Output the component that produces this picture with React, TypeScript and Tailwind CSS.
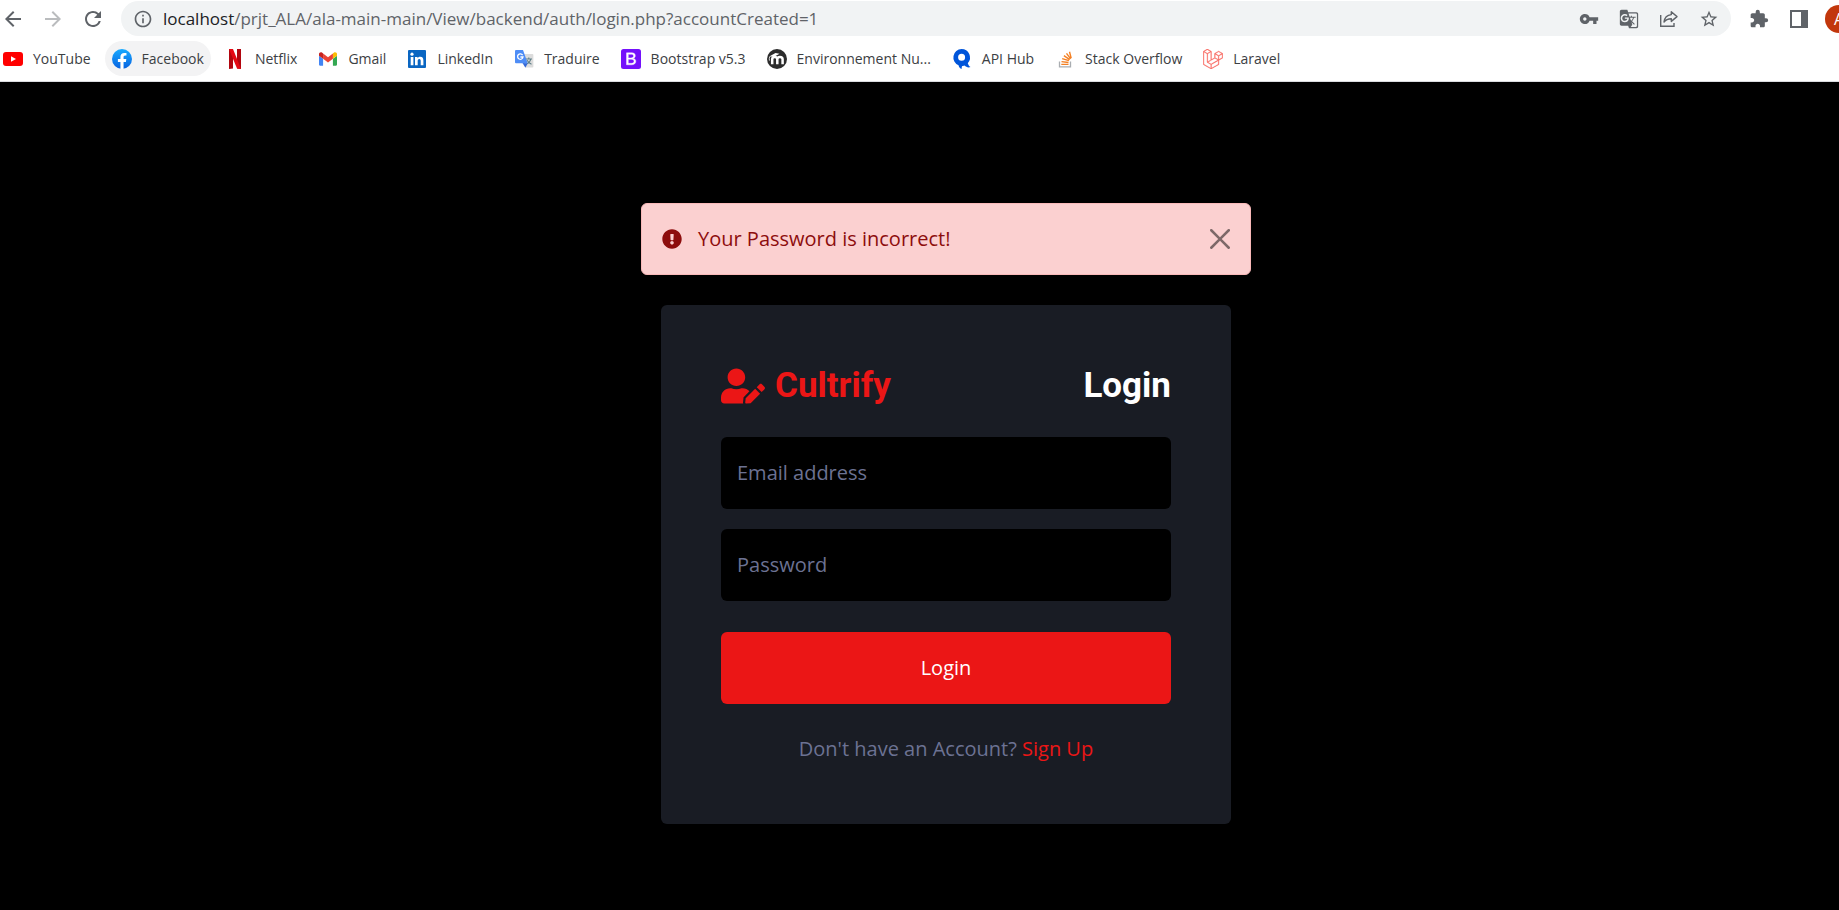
import type { ReactNode } from "react";
import {
  MdArrowBack,
  MdArrowForward,
  MdRefresh,
  MdInfoOutline,
  MdVpnKey,
  MdGTranslate,
  MdStarOutline,
  MdExtension,
} from "react-icons/md";
import { FaExclamationCircle, FaUserEdit } from "react-icons/fa";
import { SiLaravel } from "react-icons/si";

type Bookmark = { label: string; icon: ReactNode; active?: boolean };

const YouTubeIcon = () => (
  <svg viewBox="0 0 20 20" className="size-5">
    <rect x="0" y="3" width="20" height="14" rx="3" fill="#f00" />
    <path d="M8 7.2 13 10l-5 2.8z" fill="#fff" />
  </svg>
);

const FacebookIcon = () => (
  <svg viewBox="0 0 24 24" className="size-5">
    <defs>
      <linearGradient id="fb" x1="0" y1="0" x2="0" y2="1">
        <stop offset="0" stopColor="#19aaff" />
        <stop offset="1" stopColor="#0862e0" />
      </linearGradient>
    </defs>
    <circle cx="12" cy="12" r="12" fill="url(#fb)" />
    <path
      fill="#fff"
      d="M16.67 15.47 17.2 12h-3.33V9.75c0-.95.47-1.87 1.96-1.87h1.51V4.92s-1.37-.23-2.69-.23c-2.74 0-4.53 1.66-4.53 4.67V12H7.08v3.47h3.04v8.39a12 12 0 0 0 3.75 0v-8.39z"
    />
  </svg>
);

const NetflixIcon = () => (
  <svg viewBox="0 0 20 20" className="size-5">
    <path d="M4 0h4v19.6L4 20z" fill="#b1060f" />
    <path d="M12 0h4v20l-4-.4z" fill="#b1060f" />
    <path d="M4 0h4l8 20-4-.4z" fill="#e50914" />
  </svg>
);

const GmailIcon = () => (
  <svg viewBox="52 42 88 66" className="h-5 w-5 p-px">
    <path fill="#4285f4" d="M58 108h14V74L52 59v43c0 3.32 2.69 6 6 6" />
    <path fill="#34a853" d="M120 108h14c3.32 0 6-2.69 6-6V59l-20 15" />
    <path fill="#fbbc04" d="M120 48v26l20-15v-8c0-7.42-8.47-11.65-14.4-7.2" />
    <path fill="#ea4335" d="M72 74V48l24 18 24-18v26L96 92" />
    <path fill="#c5221f" d="M52 51v8l20 15V48l-5.6-4.2c-5.94-4.45-14.4-.22-14.4 7.2" />
  </svg>
);

const LinkedInIcon = () => (
  <svg viewBox="0 0 20 20" className="size-5">
    <rect x="1" y="1" width="18" height="18" rx="1" fill="#0a66c2" />
    <circle cx="5" cy="5.2" r="1.6" fill="#fff" />
    <path
      fill="#fff"
      d="M3.7 8h2.7v8.3H3.7zM8 8h2.5v1.2c.5-.8 1.4-1.4 2.7-1.4 2.500 0 3.200 1.600 3.200 4v4.500h-2.700v-4.100c0-1.100-.2-2.100-1.400-2.100-1.300 0-1.600 1-1.600 2.100v4.100H8z"
    />
  </svg>
);

const TranslateIcon = () => (
  <svg viewBox="0 0 20 20" className="size-5">
    <path d="M9 5h9.500a.9.9 0 0 1 .9.9v11.700a.9.9 0 0 1-.9.9H12z" fill="#dcdcdc" />
    <path
      d="M12 10h6M14.800 8.500V10M16.800 10c-.5 2.600-2.300 4.300-4.200 5.100M13.200 11.300c.8 1.800 2.300 3.200 4.300 4"
      fill="none"
      stroke="#5f7f88"
      strokeWidth="1.100"
    />
    <path d="m8.500 14 5.200.2-2.300 4.600z" fill="#3367d6" />
    <path d="M2 .9h7l4.700 13.400H2a1 1 0 0 1-1-1V1.900a1 1 0 0 1 1-1z" fill="#4e8df6" />
    <path
      d="M8.600 6.100A2.700 2.700 0 1 0 9 8H6.400"
      fill="none"
      stroke="#fff"
      strokeWidth="1.300"
    />
  </svg>
);

const BootstrapIcon = () => (
  <svg viewBox="0 0 20 20" className="size-5">
    <rect width="20" height="20" rx="2.500" fill="#7411fb" />
    <path
      fillRule="evenodd"
      fill="#fff"
      stroke="#fff"
      strokeWidth=".4"
      d="M5.500 3.800h5.300c2.200 0 3.500 1.100 3.500 2.900 0 1.300-.8 2.300-2 2.600v.1c1.500.2 2.500 1.300 2.500 2.900 0 2.200-1.600 3.500-4.200 3.500H5.500zm1.800 1.500v3.600h2.600c1.700 0 2.600-.6 2.600-1.800s-.8-1.800-2.200-1.800zm0 5v4h3.100c1.700 0 2.600-.7 2.600-2s-.9-2-2.800-2z"
    />
  </svg>
);

const MoodleIcon = () => (
  <svg viewBox="0 0 20 20" className="size-5">
    <circle cx="10" cy="10" r="10" fill="#2c2c2c" />
    <path
      d="M5.200 15.200V10.300c0-1.500.9-2.300 2.500-2.300s2.600.8 2.600 2.300v4.900M10.300 15.200v-4.900c0-1.500 1-2.300 2.600-2.300s2.700.8 2.700 2.300v4.900"
      fill="none"
      stroke="#fff"
      strokeWidth="2.500"
    />
    <path d="M2.200 7.600 8.500 4l4 .8-5.300 3z" fill="#fff" />
    <path d="M2.700 7.600c-.5 1.300-.5 2.600-.3 4" fill="none" stroke="#fff" strokeWidth=".8" />
  </svg>
);

const ApiHubIcon = () => (
  <svg viewBox="0 0 20 20" className="size-5">
    <path
      fillRule="evenodd"
      fill="#0055da"
      d="M9.500 0a8.500 8.500 0 0 1 6.300 14.200c.6 1.900 1.600 3.200 2.700 3.800-1.800.9-4.300.4-6-1.400l-1.600.3c-.9 0-1.200.5-1.300 3.100-1.500-.4-2.500-1.600-3.100-3.700A8.500 8.500 0 0 1 9.500 0zm.1 4.700a3.500 3.500 0 1 0 0 7 3.500 3.500 0 0 0 0-7z"
    />
  </svg>
);

const StackOverflowIcon = () => (
  <svg viewBox="0 0 20 20" className="size-5">
    <path d="M4.500 12.500v5.400h11v-5.400" fill="none" stroke="#a9adb1" strokeWidth="1.300" />
    <path
      d="M6.300 15.400h7.200M6.500 12.600l7 .9M7.200 9.600l6.700 2M8.900 6.600l5.800 4M11.500 4.300l4.200 5.600M14.500 2.800l1.700 6.500"
      fill="none"
      stroke="#f48024"
      strokeWidth="1.400"
    />
  </svg>
);

const ShareIcon = () => (
  <svg viewBox="0 0 20 20" className="size-5" fill="none" stroke="#5f6368" strokeWidth="1.400">
    <path d="M1.700 6v11.300H15V14" />
    <path d="M12.300 2.800 18 7.600l-5.700 4.800V9.700c-3 0-5.500.8-7.300 3.300.5-4 3-7 7.300-7.400z" strokeLinejoin="round" />
  </svg>
);

const SidePanelIcon = () => (
  <svg viewBox="0 0 20 20" className="size-5">
    <path fillRule="evenodd" fill="#5f6368" d="M1 1h18v18H1zM3 3v14h9V3z" />
  </svg>
);

const bookmarks: Bookmark[] = [
  { label: "YouTube", icon: <YouTubeIcon /> },
  { label: "Facebook", icon: <FacebookIcon />, active: true },
  { label: "Netflix", icon: <NetflixIcon /> },
  { label: "Gmail", icon: <GmailIcon /> },
  { label: "LinkedIn", icon: <LinkedInIcon /> },
  { label: "Traduire", icon: <TranslateIcon /> },
  { label: "Bootstrap v5.3", icon: <BootstrapIcon /> },
  { label: "Environnement Nu...", icon: <MoodleIcon /> },
  { label: "API Hub", icon: <ApiHubIcon /> },
  { label: "Stack Overflow", icon: <StackOverflowIcon /> },
  {
    label: "Laravel",
    icon: <SiLaravel className="size-5 text-[#f9665e]" stroke="currentColor" strokeWidth={0.4} />,
  },
];

function IconButton({ label, children }: { label: string; children: ReactNode }) {
  return (
    <button type="button" aria-label={label} className="flex shrink-0 items-center justify-center text-[#5f6368]">
      {children}
    </button>
  );
}

function BrowserBar() {
  return (
    <header className="border-b border-[#dadce0] bg-white pt-px pb-[5px] font-['Open_Sans','Noto_Sans',sans-serif]">
      <div className="flex h-[35px] items-center pl-px">
        <div className="flex items-center gap-4 pr-4">
          <IconButton label="Back">
            <MdArrowBack className="size-6" />
          </IconButton>
          <button type="button" aria-label="Forward" disabled className="text-[#babcbe]">
            <MdArrowForward className="size-6" />
          </button>
          <IconButton label="Reload">
            <MdRefresh className="size-6" />
          </IconButton>
        </div>
        <div className="flex h-full min-w-0 flex-1 items-center rounded-full bg-[#f1f3f4] pr-3 pl-3">
          <IconButton label="Site information">
            <MdInfoOutline className="size-5" />
          </IconButton>
          <p className="min-w-0 flex-1 truncate pl-[10px] text-[17px] leading-6 text-[#5f6368]">
            <span className="text-[#202124]">localhost</span>
            /prjt_ALA/ala-main-main/View/backend/auth/login.php?accountCreated=1
          </p>
          <div className="flex items-center gap-5">
            <IconButton label="Saved passwords">
              <MdVpnKey className="size-5" />
            </IconButton>
            <IconButton label="Translate this page">
              <MdGTranslate className="size-5" />
            </IconButton>
            <IconButton label="Share">
              <ShareIcon />
            </IconButton>
            <IconButton label="Bookmark this page">
              <MdStarOutline className="size-5" />
            </IconButton>
          </div>
        </div>
        <div className="flex items-center gap-5 pr-4 pl-[18px]">
          <IconButton label="Extensions">
            <MdExtension className="size-5" />
          </IconButton>
          <IconButton label="Side panel">
            <SidePanelIcon />
          </IconButton>
        </div>
        <div className="w-[14px] overflow-hidden">
          <button
            type="button"
            aria-label="Profile"
            className="flex size-7 items-center justify-center rounded-full bg-[#c2370c] text-base text-white"
          >
            A
          </button>
        </div>
      </div>
      <nav aria-label="Bookmarks" className="mt-[5px] flex h-[35px] items-center gap-[7px]">
        {bookmarks.map((b) => (
          <a
            key={b.label}
            href="#"
            className={
              b.active
                ? "flex h-full items-center gap-[10px] rounded-full bg-[#f3f3f4] px-[7px] text-sm whitespace-nowrap text-[#3c4043]"
                : "flex h-full items-center gap-[10px] rounded-full px-[7px] text-sm whitespace-nowrap text-[#3c4043] first:pl-[3px]"
            }
          >
            {b.icon}
            {b.label}
          </a>
        ))}
      </nav>
    </header>
  );
}

function Alert() {
  return (
    <div
      role="alert"
      className="flex h-[72px] w-full max-w-[610px] items-center rounded-[6px] border border-[#f9b9b9] bg-[#fbd0d0] px-5 text-[#8d0d0d]"
    >
      <FaExclamationCircle className="size-5 shrink-0" />
      <span className="flex-1 pl-4">Your Password is incorrect!</span>
      <button type="button" aria-label="Close" className="text-black/50">
        <svg viewBox="0 0 16 16" className="size-5" fill="currentColor">
          <path d="M.293.293a1 1 0 0 1 1.414 0L8 6.586 14.293.293a1 1 0 1 1 1.414 1.414L9.414 8l6.293 6.293a1 1 0 0 1-1.414 1.414L8 9.414l-6.293 6.293a1 1 0 0 1-1.414-1.414L6.586 8 .293 1.707a1 1 0 0 1 0-1.414z" />
        </svg>
      </button>
    </div>
  );
}

function FloatingField({ id, type, label }: { id: string; type: string; label: string }) {
  return (
    <div className="relative">
      <input
        id={id}
        type={type}
        placeholder=" "
        className="peer block h-[72px] w-full rounded-[6px] bg-black px-4 text-white outline-none"
      />
      <label
        htmlFor={id}
        className="pointer-events-none absolute inset-y-0 left-4 hidden items-center text-[#6c7293] peer-placeholder-shown:flex"
      >
        {label}
      </label>
    </div>
  );
}

function LoginCard() {
  return (
    <form
      className="w-full max-w-[570px] rounded-[6px] bg-[#191c24] p-[60px]"
      onSubmit={(e) => e.preventDefault()}
    >
      <div className="mb-[30px] flex items-center justify-between font-['Roboto',sans-serif] text-[35px] leading-[42px] font-bold">
        <a href="#" className="flex items-center gap-[10px] text-[#eb1616]">
          <FaUserEdit className="h-9 w-11" />
          <h3>Cultrify</h3>
        </a>
        <h3 className="text-white">Login</h3>
      </div>
      <div className="mb-[31px] flex flex-col gap-5">
        <FloatingField id="email" type="email" label="Email address" />
        <FloatingField id="password" type="password" label="Password" />
      </div>
      <button type="submit" className="mb-[30px] block h-[72px] w-full rounded-[6px] bg-[#eb1616] text-white">
        Login
      </button>
      <p className="text-center text-[#6c7293]">
        Don't have an Account?{" "}
        <a href="#" className="text-[#eb1616]">
          Sign Up
        </a>
      </p>
    </form>
  );
}

export default function App() {
  return (
    <div className="flex min-h-screen flex-col overflow-x-hidden bg-black">
      <BrowserBar />
      <main className="flex flex-1 flex-col items-center gap-[30px] pt-[121px] pb-[86px] pl-[53px] font-['Open_Sans','Noto_Sans',sans-serif] text-xl leading-[30px]">
        <Alert />
        <LoginCard />
      </main>
    </div>
  );
}
